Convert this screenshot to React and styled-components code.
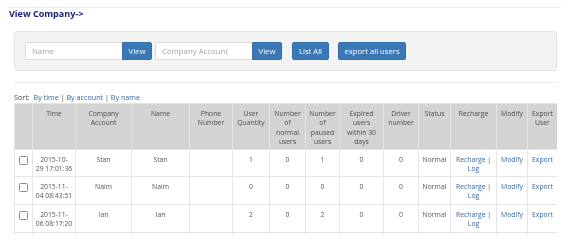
import React from "react";
import styled, { createGlobalStyle } from "styled-components";

const Global = createGlobalStyle`
  html, body { margin: 0; padding: 0; background: #fff; }
  body {
    font-family: "Open Sans", "Noto Sans", sans-serif;
    color: #555;
    -webkit-font-smoothing: antialiased;
  }
`;

const Page = styled.div`
  width: 572px;
  height: 252px;
  overflow: hidden;
  padding: 7px 0 0 0;
  box-sizing: border-box;
  will-change: transform;
`;

const TopRule = styled.div`
  margin: 0 11px 0 8px;
  border-top: 1px solid #ececec;
`;

const Title = styled.h3`
  margin: 1px 0 0 9px;
  font-size: 9px;
  line-height: 10px;
  height: 10px;
  font-weight: 700;
  color: #20217a;
`;

const Content = styled.div`
  margin: 0 15px 0 14px;
`;

const Panel = styled.div`
  margin-top: 12px;
  height: 40px;
  box-sizing: border-box;
  background: #f3f3f3;
  border: 1px solid #e4e4e4;
  border-radius: 3px;
  display: flex;
  align-items: center;
  padding: 0 10px;
`;

const SearchGroup = styled.div`
  display: flex;
  margin-right: ${(p) => p.$gap}px;
`;

const Input = styled.input`
  width: 97px;
  height: 18px;
  box-sizing: border-box;
  border: 1px solid #dcdcdc;
  border-right: none;
  border-radius: 2px 0 0 2px;
  padding: 0 6px;
  font-family: inherit;
  font-size: 7.8px;
  color: #555;
  background: #fff;
  outline: none;
  &::placeholder { color: #a4a4a4; }
`;

const Button = styled.button`
  height: 18px;
  width: ${(p) => p.$w}px;
  box-sizing: border-box;
  border: 1px solid #3470ab;
  background: #3b78b6;
  color: #fff;
  font-family: inherit;
  font-size: 7.7px;
  padding: 0;
  border-radius: ${(p) => (p.$joined ? "0 2px 2px 0" : "2px")};
  margin-right: ${(p) => p.$mr || 0}px;
  cursor: pointer;
`;

const Divider = styled.div`
  margin-top: 11px;
  border-top: 1px solid #ececec;
`;

const SortBar = styled.div`
  margin-top: 9px;
  font-size: 7.2px;
  line-height: 10px;
  height: 11px;
  color: #4a4a4a;
`;

const Link = styled.a`
  color: #3a6899;
  text-decoration: none;
  margin-left: ${(p) => p.$ml || 0}px;
`;

const TableClip = styled.div`
  height: 132px;
  overflow: hidden;
`;

const Table = styled.table`
  width: 543px;
  border-collapse: collapse;
  table-layout: fixed;
  font-size: 6.8px;
  line-height: 9.3px;
`;

const Th = styled.th`
  background: #d3d3d3;
  border: 1px solid #e4e4e4;
  font-weight: 400;
  color: #4e4e4e;
  vertical-align: top;
  text-align: center;
  padding: 5px 1px 0;
  height: 46px;
  box-sizing: border-box;
`;

const Tr = styled.tr`
  height: ${(p) => p.$h}px;
`;

const Td = styled.td`
  border: 1px solid #e6e6e6;
  vertical-align: top;
  text-align: center;
  padding: 5px 1px 0;
  color: #555;
  box-sizing: border-box;
`;

const Line = styled.span`
  display: block;
  white-space: nowrap;
`;

const Check = styled.span`
  display: inline-block;
  width: 7px;
  height: 7px;
  margin-top: 1px;
  border: 1px solid #8a8a8a;
  border-radius: 1.5px;
  background: #fff;
`;

const widths = [18, 43, 56, 58, 43, 37, 36, 34, 44, 35, 32, 46, 31, 30];
const headers = [
  [],
  ["Time"],
  ["Company", "Account"],
  ["Name"],
  ["Phone", "Number"],
  ["User", "Quantity"],
  ["Number", "of", "normal", "users"],
  ["Number", "of", "paused", "users"],
  ["Expired", "users", "within 30", "days"],
  ["Driver", "number"],
  ["Status"],
  ["Recharge"],
  ["Modify"],
  ["Export", "User"],
];

const rows = [
  { h: 27, day: "2015-10-", rest: "29 17:01:36", acc: "Stan", name: "Stan", q: 1, n: 0, p: 1, e: 0, d: 0 },
  { h: 28, day: "2015-11-", rest: "04 08:43:51", acc: "Naim", name: "Naim", q: 0, n: 0, p: 0, e: 0, d: 0 },
  { h: 28, day: "2015-11-", rest: "06 08:17:20", acc: "Ian", name: "Ian", q: 2, n: 0, p: 2, e: 0, d: 0 },
];

export default function App() {
  return (
    <Page>
      <Global />
      <TopRule />
      <Title>View Company-&gt;</Title>
      <Content>
        <Panel>
          <SearchGroup $gap={3}>
            <Input placeholder="Name" />
            <Button $w={30} $joined>View</Button>
          </SearchGroup>
          <SearchGroup $gap={10}>
            <Input placeholder="Company Account" />
            <Button $w={30} $joined>View</Button>
          </SearchGroup>
          <Button $w={37} $mr={9}>List All</Button>
          <Button $w={68}>export all users</Button>
        </Panel>
        <Divider />
        <SortBar>
          Sort: <Link $ml={2}>By time</Link> | <Link>By account</Link> | <Link>By name</Link>
        </SortBar>
        <TableClip>
          <Table>
            <colgroup>
              {widths.map((w, i) => (
                <col key={i} style={{ width: w }} />
              ))}
            </colgroup>
            <thead>
              <tr>
                {headers.map((h, i) => (
                  <Th key={i}>
                    {h.map((l, j) => (
                      <Line key={j}>{l}</Line>
                    ))}
                  </Th>
                ))}
              </tr>
            </thead>
            <tbody>
              {rows.map((r, i) => (
                <Tr key={i} $h={r.h}>
                  <Td><Check /></Td>
                  <Td>
                    <Line>{r.day}</Line>
                    <Line>{r.rest}</Line>
                  </Td>
                  <Td>{r.acc}</Td>
                  <Td>{r.name}</Td>
                  <Td></Td>
                  <Td>{r.q}</Td>
                  <Td>{r.n}</Td>
                  <Td>{r.p}</Td>
                  <Td>{r.e}</Td>
                  <Td>{r.d}</Td>
                  <Td>Normal</Td>
                  <Td>
                    <Line><Link>Recharge</Link> |</Line>
                    <Line><Link>Log</Link></Line>
                  </Td>
                  <Td><Link>Modify</Link></Td>
                  <Td><Link>Export</Link></Td>
                </Tr>
              ))}
              <Tr $h={28}>
                {widths.map((_, i) => (
                  <Td key={i} />
                ))}
              </Tr>
            </tbody>
          </Table>
        </TableClip>
      </Content>
    </Page>
  );
}
